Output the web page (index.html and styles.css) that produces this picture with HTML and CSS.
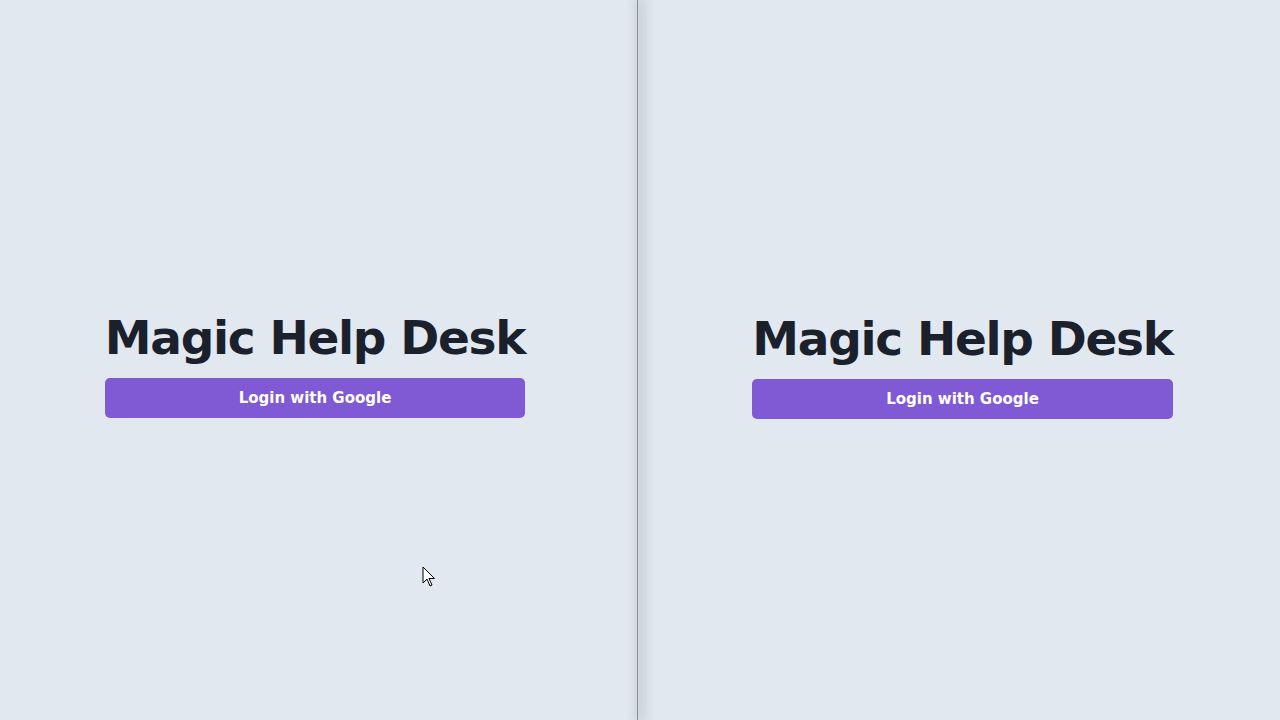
FILE: index.html
```html
<!DOCTYPE html>
<html lang="en">
<head>
<meta charset="utf-8">
<title>Magic Help Desk</title>
<link rel="stylesheet" href="styles.css">
</head>
<body>
<div class="split">
  <section class="pane pane-left">
    <div class="login">
      <h1 class="title">Magic Help Desk</h1>
      <button class="btn">Login with Google</button>
    </div>
  </section>
  <div class="divider"></div>
  <section class="pane pane-right">
    <div class="login login-right">
      <h1 class="title">Magic Help Desk</h1>
      <button class="btn">Login with Google</button>
    </div>
  </section>
</div>
<svg class="cursor" width="14" height="22" viewBox="0 0 14 22"><path d="M1 1 L1 17 L5 13 L8 20 L10 19 L7 12.5 L12.5 12.5 Z" fill="#fff" stroke="#000" stroke-width="1" stroke-linejoin="miter"/></svg>
</body>
</html>
```
FILE: styles.css
```css
html, body {
  margin: 0;
  height: 100%;
  background: #e2e8f0;
}
body {
  font-family: "DejaVu Sans", "Liberation Sans", sans-serif;
  color: #1a202c;
  overflow: hidden;
}
.split {
  display: flex;
  height: 720px;
}
.pane {
  display: flex;
  align-items: center;
  justify-content: center;
  background: #e2e8f0;
}
.pane-left {
  width: 630px;
  padding-right: 7px;
}
.pane-right {
  flex: 1;
  padding-left: 7px;
}
.divider {
  width: 1px;
  background: #8a9099;
  box-shadow: 3px 0 12px 2px rgba(60, 70, 90, 0.32);
  position: relative;
  z-index: 1;
}
.login {
  display: flex;
  flex-direction: column;
  align-items: stretch;
  margin-top: 12px;
}
.login-right {
  margin-top: 13px;
}
.title {
  margin: 0 0 16px;
  font-size: 47px;
  line-height: 48px;
  font-weight: 700;
  letter-spacing: -1.3px;
  white-space: nowrap;
}
.btn {
  height: 40px;
  border: 0;
  border-radius: 5px;
  background: #805ad5;
  color: #fff;
  font-family: inherit;
  font-size: 15px;
  font-weight: 700;
  cursor: pointer;
}
.cursor {
  position: absolute;
  left: 422px;
  top: 566px;
}
```
